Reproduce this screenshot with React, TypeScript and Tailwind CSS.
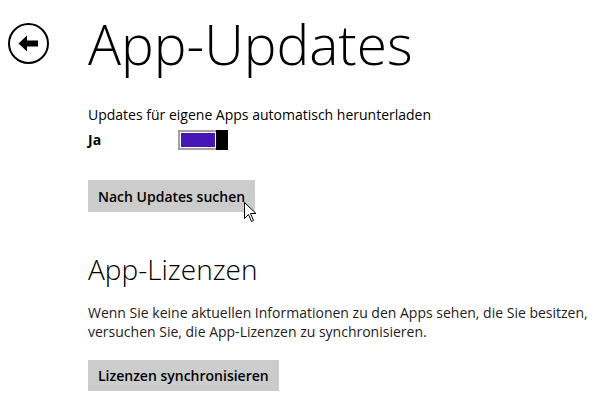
export default function App() {
  return (
    <div className="relative h-[412px] w-[608px] overflow-hidden bg-white font-['Open_Sans',sans-serif] text-black">
      <div className="flex">
        <div className="w-[88px] pl-[8px] pt-[23px]">
          <svg width="41" height="41" viewBox="0 0 41 41">
            <circle cx="20.5" cy="20.5" r="19.5" fill="none" stroke="#000" strokeWidth="2" />
            <path d="M10.5 20.5 L19 12.5 L19 17.5 L30 17.5 L30 23.5 L19 23.5 L19 28.5 Z" fill="#000" />
          </svg>
        </div>
        <div className="flex flex-col">
          <h1 className="mt-[11px] text-[55px] font-light leading-[66px]">App-Updates</h1>

          <p className="mt-[29px] text-[14px] leading-[18px]">Updates für eigene Apps automatisch herunterladen</p>
          <div className="mt-[5px] flex items-center">
            <span className="w-[90px] text-[14px] font-bold">Ja</span>
            <div className="flex h-[20px] w-[50px] items-stretch">
              <div className="flex-1 border-2 border-r-0 border-[#a3a3a3] p-px">
                <div className="h-full bg-[#4617b4]" />
              </div>
              <div className="w-[12px] bg-black" />
            </div>
          </div>

          <div className="mt-[30px]">
            <button className="h-[32px] bg-[#cccccc] px-[10px] text-[14px] font-semibold">Nach Updates suchen</button>
          </div>

          <h2 className="mt-[39px] text-[28px] font-light leading-[36px]">App-Lizenzen</h2>
          <p className="mt-[16px] text-[14px] leading-[19px] text-[#222]">
            Wenn Sie keine aktuellen Informationen zu den Apps sehen, die Sie besitzen,
            <br />
            versuchen Sie, die App-Lizenzen zu synchronisieren.
          </p>
          <div className="mt-[19px]">
            <button className="h-[31px] bg-[#cccccc] px-[10px] text-[14px] font-semibold">Lizenzen synchronisieren</button>
          </div>
        </div>
      </div>

      <svg className="absolute left-[244px] top-[202px]" width="13" height="21" viewBox="0 0 13 21">
        <path d="M0.5 0.5 L0.5 16.5 L4.5 12.5 L7.5 19.5 L9.5 18.5 L6.5 11.5 L12 11.5 Z" fill="#fff" stroke="#000" strokeWidth="1" />
      </svg>
    </div>
  );
}
